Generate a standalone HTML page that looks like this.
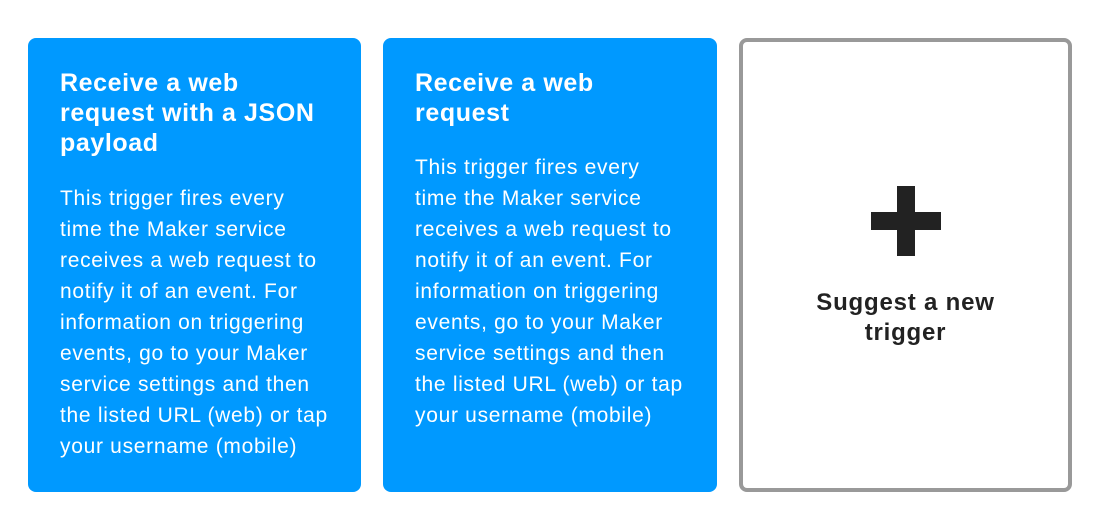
<!DOCTYPE html>
<html><head><style>
body{margin:0;width:1114px;height:532px;background:#fff;font-family:"Liberation Sans",sans-serif;position:relative;overflow:hidden}
.c{position:absolute;top:38px;height:454px;width:333px;background:#0099ff;border-radius:8px;color:#fff;box-sizing:border-box}
.t{position:absolute;left:32px;font-size:25px;letter-spacing:0.6px;font-weight:bold;line-height:30px;margin:0;white-space:nowrap}
.b{position:absolute;left:32px;font-size:21px;letter-spacing:0.7px;line-height:31px;white-space:nowrap}
.g{position:absolute;left:739px;top:38px;width:333px;height:454px;box-sizing:border-box;border:4px solid #999;border-radius:8px}
.h{position:absolute;background:#222}
.s{position:absolute;left:0;width:100%;top:246px;text-align:center;font-size:24px;letter-spacing:0.8px;font-weight:bold;line-height:30px;color:#222}
</style></head><body>
<div class="c" style="left:28px">
<div class="t" style="top:30px">Receive a web<br>request with a JSON<br>payload</div>
<div class="b" style="top:145px">This trigger fires every<br>time the Maker service<br>receives a web request to<br>notify it of an event. For<br>information on triggering<br>events, go to your Maker<br>service settings and then<br>the listed URL (web) or tap<br>your username (mobile)</div>
</div>
<div class="c" style="left:383px;width:334px">
<div class="t" style="top:30px">Receive a web<br>request</div>
<div class="b" style="top:114px">This trigger fires every<br>time the Maker service<br>receives a web request to<br>notify it of an event. For<br>information on triggering<br>events, go to your Maker<br>service settings and then<br>the listed URL (web) or tap<br>your username (mobile)</div>
</div>
<div class="g">
<div class="h" style="left:154px;top:144px;width:18px;height:70px"></div>
<div class="h" style="left:128px;top:170px;width:70px;height:18px"></div>
<div class="s">Suggest a new<br>trigger</div>
</div>
</body></html>
